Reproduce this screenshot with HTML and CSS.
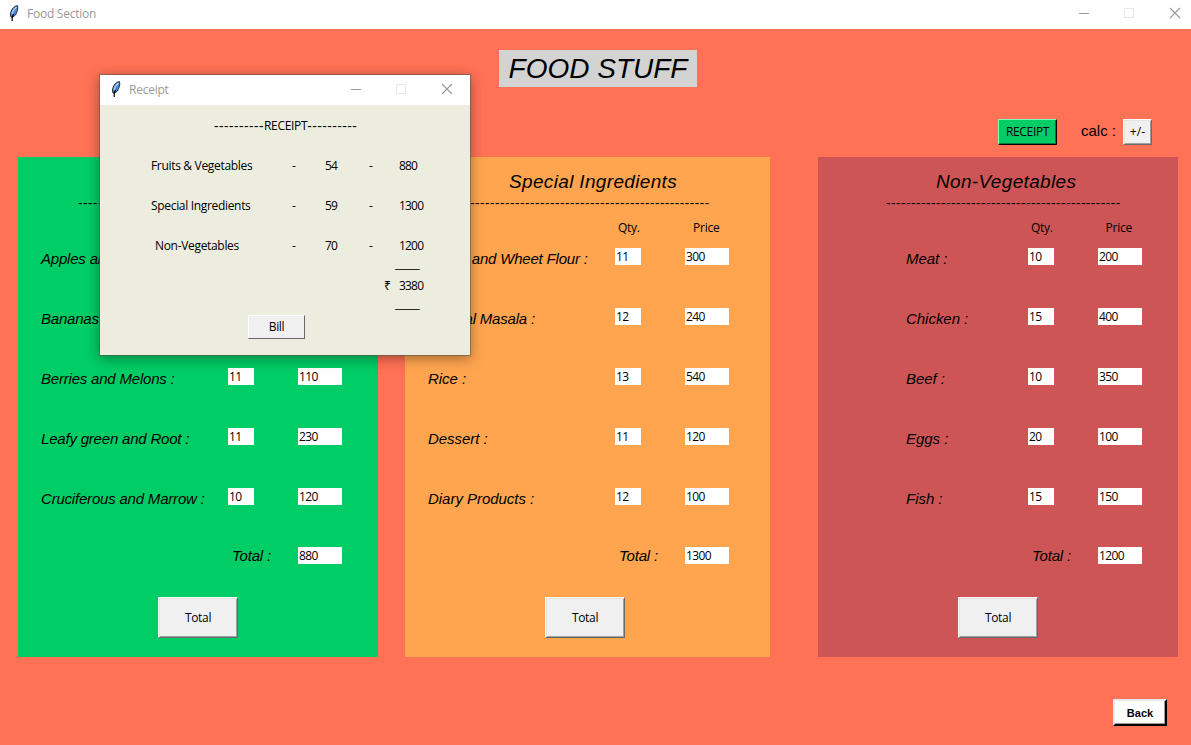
FILE: index.html
```html
<!DOCTYPE html>
<html lang="en">
<head>
<meta charset="utf-8">
<title>Food Section</title>
<link rel="stylesheet" href="styles.css">
</head>
<body>
<svg width="0" height="0" class="defs">
  <symbol id="feather" viewBox="0 0 10 17">
    <path d="M8.500 .6 6 1.200 3.200 4 1.600 7.500 1.500 11 2.500 12.300 3.500 12.300 6.500 10 8.200 6 8.800 3Z" fill="#4a8ad8" stroke="#1c2430" stroke-width=".9"/>
    <path d="M7.500 2 4.200 5.500 3 9" stroke="#a9d3f7" stroke-width="1.300" fill="none"/>
    <path d="M4.600 9 3.200 12V16" stroke="#000" stroke-width="1.200" fill="none"/>
  </symbol>
  <symbol id="controls" viewBox="0 0 103 12">
    <path d="M1 6.500h10" stroke="#999" fill="none"/>
    <rect x="46.500" y="1.500" width="9" height="9" stroke="#e8e8e8" fill="none"/>
    <path d="M92 1 102 11M102 1 92 11" stroke="#999" stroke-width="1.100" fill="none"/>
  </symbol>
</svg>
<div class="app">
  <header class="titlebar">
    <svg class="feather"><use href="#feather"/></svg>
    <span class="caption">Food Section</span>
    <svg class="controls"><use href="#controls"/></svg>
  </header>
  <main class="main">
    <h1 class="heading">FOOD STUFF</h1>
    <div class="toolbar">
      <button class="btn green-btn">RECEIPT</button>
      <span class="calc">calc :</span>
      <button class="btn calc-btn">+/-</button>
    </div>
    <div class="panels">
      <section class="panel green">
        <h2 class="p1"></h2>
        <div class="dashes">-----</div>
        <div class="cols"></div>
        <div class="row"><label>Apples and</label></div>
        <div class="row"><label>Bananas</label></div>
        <div class="row"><label>Berries and Melons :</label><span class="field">11</span><span class="field price">110</span></div>
        <div class="row"><label>Leafy green and Root :</label><span class="field">11</span><span class="field price">230</span></div>
        <div class="row"><label>Cruciferous and Marrow :</label><span class="field">10</span><span class="field price">120</span></div>
        <div class="sum"><label>Total :</label><span class="field price">880</span></div>
        <button class="btn total">Total</button>
      </section>
      <section class="panel orange">
        <h2 class="p2">Special Ingredients</h2>
        <div class="dashes">-------------------------------------------------</div>
        <div class="cols"><span>Qty.</span><span>Price</span></div>
        <div class="row"><label>Maida and Wheet Flour :</label><span class="field">11</span><span class="field price">300</span></div>
        <div class="row"><label>Special Masala :</label><span class="field">12</span><span class="field price">240</span></div>
        <div class="row"><label class="short">Rice :</label><span class="field">13</span><span class="field price">540</span></div>
        <div class="row"><label class="short">Dessert :</label><span class="field">11</span><span class="field price">120</span></div>
        <div class="row"><label class="short">Diary Products :</label><span class="field">12</span><span class="field price">100</span></div>
        <div class="sum"><label>Total :</label><span class="field price">1300</span></div>
        <button class="btn total">Total</button>
      </section>
      <section class="panel red">
        <h2 class="p3">Non-Vegetables</h2>
        <div class="dashes">-----------------------------------------------</div>
        <div class="cols"><span>Qty.</span><span>Price</span></div>
        <div class="row"><label class="short">Meat :</label><span class="field">10</span><span class="field price">200</span></div>
        <div class="row"><label class="short">Chicken :</label><span class="field">15</span><span class="field price">400</span></div>
        <div class="row"><label class="short">Beef :</label><span class="field">10</span><span class="field price">350</span></div>
        <div class="row"><label class="short">Eggs :</label><span class="field">20</span><span class="field price">100</span></div>
        <div class="row"><label class="short">Fish :</label><span class="field">15</span><span class="field price">150</span></div>
        <div class="sum"><label>Total :</label><span class="field price">1200</span></div>
        <button class="btn total">Total</button>
      </section>
    </div>
    <button class="btn back">Back</button>
  </main>
  <div class="popup">
    <header class="titlebar small">
      <svg class="feather"><use href="#feather"/></svg>
      <span class="caption">Receipt</span>
      <svg class="controls"><use href="#controls"/></svg>
    </header>
    <div class="receipt">
      <div class="receipt-title"><span class="hy">----------</span><span>RECEIPT</span><span class="hy">----------</span></div>
      <div class="line"><span>Fruits &amp; Vegetables</span><span>-</span><span class="num">54</span><span>-</span><span class="num">880</span></div>
      <div class="line"><span>Special Ingredients</span><span>-</span><span class="num">59</span><span>-</span><span class="num">1300</span></div>
      <div class="line"><span class="inset">Non-Vegetables</span><span>-</span><span class="num">70</span><span>-</span><span class="num">1200</span></div>
      <div class="rule">_____</div>
      <div class="grand"><span>₹</span><span class="num">3380</span></div>
      <div class="rule">_____</div>
      <button class="btn bill">Bill</button>
    </div>
  </div>
</div>
</body>
</html>
```
FILE: styles.css
```css
* { box-sizing: border-box; }
body { margin: 0; font: 12px/16px "Open Sans", "Noto Sans", sans-serif; letter-spacing: -0.32px; color: #000; }
.defs { position: absolute; }
.app { position: relative; width: 1191px; height: 745px; display: flex; flex-direction: column; background: #ff7256; overflow: hidden; }
.titlebar { display: flex; align-items: flex-start; height: 29px; background: #fff; padding: 5px 10px 0 9px; color: #999; flex: none; }
.feather { width: 10px; height: 17px; }
.caption { margin: 1px auto 0 8px; letter-spacing: -0.25px; }
.controls { width: 103px; height: 12px; margin-top: 2px; }
.main { display: flex; flex-direction: column; flex: 1; }
.heading { margin: 21px 0 0 499px; width: 198px; height: 37px; background: #d3d3d3; text-align: center; font: italic 28px/37px "Liberation Sans", sans-serif; letter-spacing: 0; }
.toolbar { display: flex; margin: 32px 39px 0 0; justify-content: flex-end; height: 26px; }
.calc { width: 66px; padding-left: 24px; font: 15px/24px "Liberation Sans", sans-serif; letter-spacing: 0; white-space: nowrap; }
.btn { font: inherit; letter-spacing: inherit; color: #000; padding: 0; border: 1px solid; border-color: #fff #696969 #696969 #fff; background: #f0f0f0; border-radius: 0; box-shadow: inset 1px 1px #e3e3e3, inset -1px -1px #a0a0a0; }
.green-btn { width: 59px; background: #00cd66; border-color: #7fffb8 #000 #000 #7fffb8; box-shadow: inset -1px -1px #007b3d; }
.calc-btn { width: 29px; letter-spacing: 0.2px; }
.panels { display: flex; margin: 12px 0 0 18px; height: 500px; }
.panel { width: 360px; height: 500px; display: flex; flex-direction: column; }
.green { background: #00cd66; }
.orange { background: #ffa54f; width: 365px; margin: 0 48px 0 27px; }
.red { background: #cd5555; }
.panel h2 { margin: 12px 0 0; height: 26px; font: italic 19px/26px "Liberation Sans", sans-serif; letter-spacing: 0.34px; white-space: nowrap; }
.p2 { padding-left: 104px; }
.p3 { padding-left: 118px; }
.dashes { height: 16px; padding-left: 60px; font-size: 14px; letter-spacing: 0.492px; white-space: nowrap; }
.red .dashes { padding-left: 68px; }
.cols { display: flex; margin-top: 9px; padding-left: 213px; height: 16px; }
.cols span { width: 75px; }
.cols span + span { letter-spacing: -0.2px; }
.red .cols span + span { padding-left: 1px; }
.row { display: flex; height: 17px; margin: 12px 0 31px; padding-left: 23px; flex: none; }
.row label { width: 187px; }
.row + .row { margin-top: 12px; }
.red .row { padding-left: 88px; }
.red .row label { width: 122px; }
.row label, .sum label { font: italic 15px/22px "Liberation Sans", sans-serif; letter-spacing: -0.2px; white-space: nowrap; }
.row label.short { letter-spacing: -0.03px; }
.field { width: 26px; height: 17px; background: #fff; padding-left: 1px; line-height: 17px; margin-right: 44px; letter-spacing: -0.6px; }
.num { letter-spacing: -0.8px; }
.price { width: 44px; margin: 0; }
.sum { display: flex; padding-left: 214px; height: 17px; margin-top: 11px; }
.sum label { width: 66px; line-height: 18px; }
.total { width: 80px; height: 41px; margin: 33px 0 0 140px; flex: none; }
.back { width: 54px; height: 27px; margin: 42px 0 0 1113px; background: #fff; font: bold 11px/16px "Liberation Sans", sans-serif; letter-spacing: 0; border-width: 2px; border-color: #e8e8e8 #000 #000 #e8e8e8; box-shadow: inset -1px -1px #999; }
.popup { position: absolute; left: 99px; top: 74px; width: 372px; height: 282px; border: 1px solid rgba(90, 90, 80, .6); background: #eceddf; background-clip: padding-box; box-shadow: 0 3px 12px rgba(0, 0, 0, .34); }
.small { height: 30px; padding: 6px 17px 0 11px; }
.receipt { display: flex; flex-direction: column; }
.receipt-title { margin: 13px 0 0 114px; height: 16px; display: flex; }
.hy { font-size: 14px; letter-spacing: 0.492px; }
.line { display: grid; grid-template-columns: 141px 33px 44px 30px 40px; margin: 24px 0 0 51px; height: 16px; white-space: nowrap; }
.inset { padding-left: 4px; }
.rule { margin-left: 295px; height: 12px; line-height: 12px; margin-top: 4px; letter-spacing: -.38px; }
.grand { display: flex; margin: 8px 0 0 284px; height: 16px; }
.grand span { width: 15px; }
.bill { width: 57px; height: 24px; margin: 5px 0 0 148px; box-shadow: none; }
```
